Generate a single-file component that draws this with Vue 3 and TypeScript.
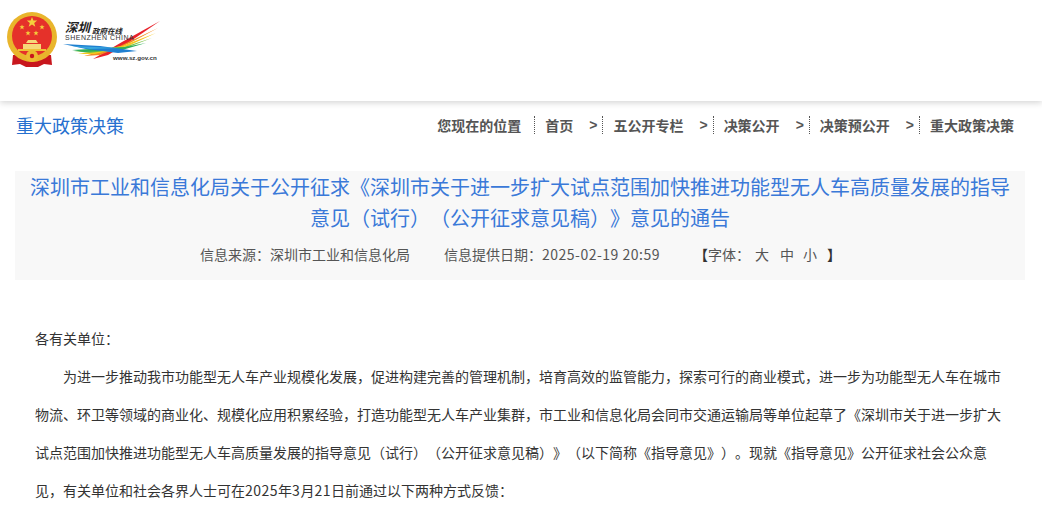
<script setup lang="ts">
const crumbs: string[] = ['首页', '五公开专栏', '决策公开', '决策预公开', '重大政策决策']
const streaks: { d: string; c: string }[] = [
  { d: 'M93 59 L122 42 L160 21 L128 43 L108 55 Z', c: '#e8222a' },
  { d: 'M84 56 L120 46 L158 28 L130 43 L100 55 Z', c: '#f28c1e' },
  { d: 'M78 54 L122 46 L156 33 L128 46 L95 54 Z', c: '#f6c81e' },
  { d: 'M74 51 L124 47 L152 38 L126 48 L90 53 Z', c: '#7cc242' },
  { d: 'M72 50 L125 47 L146 43 L122 50 L84 52 Z', c: '#2fae5a' },
  { d: 'M63 44 L100 46 L137 51 L118 53 L86 49 Z', c: '#1f7fd0' },
  { d: 'M72 46 L118 48 L90 49 Z', c: '#39a8df' }
]
</script>

<template>
  <div class="page">
    <header class="top">
      <div class="logos">
        <svg class="emblem" width="52" height="57" viewBox="0 0 52 57" aria-hidden="true">
          <path d="M7 44 L6 54 L14 53 L20 56 L32 56 L38 53 L46 54 L45 44 Z" fill="#c8161d" />
          <circle cx="26" cy="26" r="25" fill="#e9b52c" />
          <circle cx="26" cy="25" r="20" fill="#e5312a" />
          <path d="M26 6 L27.4 9.6 L31.2 9.6 L28.2 12 L29.3 15.8 L26 13.6 L22.7 15.8 L23.8 12 L20.8 9.6 L24.6 9.6 Z" fill="#f4cf3c" />
          <path d="M16 13.5l.7 1.8h1.9l-1.5 1.2.6 1.9-1.7-1.2-1.7 1.2.6-1.9-1.5-1.2h1.9z" fill="#f4cf3c" />
          <path d="M36 13.5l.7 1.8h1.9l-1.5 1.2.6 1.9-1.7-1.2-1.7 1.2.6-1.9-1.5-1.2h1.9z" fill="#f4cf3c" />
          <path d="M22 19.5l.7 1.8h1.9l-1.5 1.2.6 1.9-1.7-1.2-1.7 1.2.6-1.9-1.5-1.2h1.9z" fill="#f4cf3c" />
          <path d="M30 19.5l.7 1.8h1.9l-1.5 1.2.6 1.9-1.7-1.2-1.7 1.2.6-1.9-1.5-1.2h1.9z" fill="#f4cf3c" />
          <path d="M20 32 L22 29 L30 29 L32 32 Z M17 33 H35 V38 H17 Z" fill="#f6d979" />
          <rect x="12" y="38" width="28" height="2" fill="#f0c236" />
          <circle cx="26" cy="45" r="6" fill="#edbb31" />
          <circle cx="26" cy="45" r="2.2" fill="#c8161d" />
        </svg>
        <div class="brand">
          <svg width="98" height="46" viewBox="0 0 98 46" aria-hidden="true">
            <g transform="translate(-63 -18)">
              <path v-for="(s, i) in streaks" :key="i" :d="s.d" :fill="s.c" />
            </g>
          </svg>
          <b class="cn-a">深圳</b>
          <i class="cn-b">政府在线</i>
          <span class="en">SHENZHEN CHINA</span>
          <span class="url">www.sz.gov.cn</span>
        </div>
      </div>
    </header>

    <nav class="bar">
      <h2 class="section">重大政策决策</h2>
      <div class="crumbs">
        <span class="here">您现在的位置</span>
        <template v-for="(c, i) in crumbs" :key="c">
          <span class="crumb">{{ c }}</span>
          <span v-if="i < crumbs.length - 1" class="arrow">&gt;</span>
        </template>
      </div>
    </nav>

    <section class="head">
      <h1>深圳市工业和信息化局关于公开征求《深圳市关于进一步扩大试点范围加快推进功能型无人车高质量发展的指导意见&#xFF08;试行&#xFF09;&#xFF08;公开征求意见稿&#xFF09;》意见的通告</h1>
      <div class="meta">
        <span>信息来源&#xFF1A;深圳市工业和信息化局</span>
        <span class="date">信息提供日期&#xFF1A;<span class="num">2025-02-19 20:59</span></span>
        <span class="font">
          <b class="br">【</b>字体&#xFF1A;<em class="large">大</em><em class="mid">中</em><em class="small">小</em><b class="br end">】</b>
        </span>
      </div>
    </section>

    <article class="body">
      <p class="salute">各有关单位&#xFF1A;</p>
      <p class="para">为进一步推动我市功能型无人车产业规模化发展&#xFF0C;促进构建完善的管理机制&#xFF0C;培育高效的监管能力&#xFF0C;探索可行的商业模式&#xFF0C;进一步为功能型无人车在城市物流、环卫等领域的商业化、规模化应用积累经验&#xFF0C;打造功能型无人车产业集群&#xFF0C;市工业和信息化局会同市交通运输局等单位起草了《深圳市关于进一步扩大试点范围加快推进功能型无人车高质量发展的指导意见&#xFF08;试行&#xFF09;&#xFF08;公开征求意见稿&#xFF09;》&#xFF08;以下简称《指导意见》&#xFF09;。现就《指导意见》公开征求社会公众意见&#xFF0C;有关单位和社会各界人士可在<span class="num">2025</span>年<span class="num">3</span>月<span class="num">21</span>日前通过以下两种方式反馈&#xFF1A;</p>
    </article>
  </div>
</template>

<style scoped>
.page {
  height: 505px;
  overflow: hidden;
  background: #fff;
  font-family: "Noto Sans CJK SC", "Liberation Sans", sans-serif;
  color: #444;
  text-spacing-trim: space-all;
}
.top {
  height: 101px;
  box-shadow: 0 2px 6px rgba(0, 0, 0, 0.16);
  box-sizing: border-box;
  padding: 11px 0 0 6px;
}
.logos {
  display: flex;
  align-items: flex-start;
  gap: 5px;
}
.brand {
  position: relative;
  width: 98px;
  height: 52px;
  margin-top: 7px;
}
.brand svg {
  display: block;
}
.cn-a {
  position: absolute;
  left: 2px;
  top: 2px;
  font-size: 12.5px;
  line-height: 14px;
  font-style: italic;
  font-weight: 700;
  color: #222;
  white-space: nowrap;
}
.cn-b {
  position: absolute;
  left: 29px;
  top: 9px;
  font-size: 7.5px;
  line-height: 7px;
  font-weight: 700;
  color: #222;
  white-space: nowrap;
}
.en {
  position: absolute;
  left: 2px;
  top: 16px;
  font-family: "Liberation Sans", sans-serif;
  font-size: 7px;
  line-height: 7px;
  letter-spacing: 0.5px;
  color: #333;
  white-space: nowrap;
}
.url {
  position: absolute;
  left: 50px;
  top: 36px;
  font-family: "Liberation Sans", sans-serif;
  font-size: 6.2px;
  line-height: 8px;
  font-weight: 700;
  color: #333;
  white-space: nowrap;
}
.bar {
  display: flex;
  align-items: center;
  justify-content: space-between;
  height: 50px;
  box-sizing: border-box;
  padding: 0 28px 2px 16px;
}
.section {
  margin: 0;
  font-size: 18px;
  font-weight: 400;
  line-height: 48px;
  color: #2670cf;
}
.crumbs {
  display: flex;
  align-items: center;
  font-size: 14px;
  font-weight: 700;
  line-height: 18px;
  color: #555;
}
.here {
  padding-right: 13px;
}
.crumb {
  padding-left: 10px;
  border-left: 1px dotted #555;
}
.arrow {
  padding: 0 5px 0 16px;
  font-family: "Liberation Sans", sans-serif;
}
.head {
  margin: 20px 17px 0 15px;
  height: 109px;
  box-sizing: border-box;
  padding: 0 15px;
  background: #f8f8f8;
}
.head h1 {
  margin: 0;
  font-size: 20px;
  font-weight: 400;
  line-height: 31px;
  text-align: center;
  color: #3a79d8;
}
.meta {
  display: flex;
  padding: 10px 0 0 170px;
  font-size: 14px;
  line-height: 22px;
  color: #555;
}
.date,
.font {
  margin-left: 34px;
}
.num {
  letter-spacing: 0.5px;
}
.font em {
  font-style: normal;
}
.large {
  margin-left: 5px;
}
.mid {
  margin-left: 11px;
}
.small {
  margin-left: 9px;
}
.br {
  font-weight: 700;
  color: #333;
}
.br.end {
  margin-left: 10px;
}
.body {
  padding: 39px 36px 0 35px;
  font-size: 14px;
  color: #333;
}
.body p {
  margin: 0;
  line-height: 38px;
}
.para {
  text-indent: 28px;
}
</style>

<style>
html, body {
  margin: 0;
  overflow: hidden;
}
</style>
